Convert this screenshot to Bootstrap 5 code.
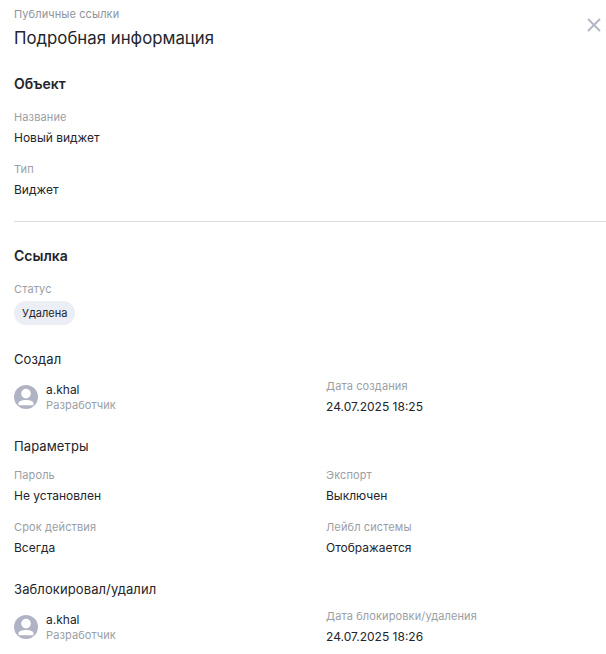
<!DOCTYPE html>
<html lang="ru">
<head>
  <meta charset="UTF-8">
  <meta name="viewport" content="width=device-width, initial-scale=1.0">
  <title>Подробная информация</title>
  <link href="https://cdn.jsdelivr.net/npm/bootstrap@5.3.3/dist/css/bootstrap.min.css" rel="stylesheet">
  <script src="https://cdn.jsdelivr.net/npm/bootstrap@5.3.3/dist/js/bootstrap.bundle.min.js"></script>
  <style>
    body { font-family: Inter, "Noto Sans", sans-serif; color: #23252b; background: #fff; overflow: hidden; }
    .panel-wrap { position: relative; padding: 6px 0 0 14px; height: 654px; overflow: hidden; }
    .crumb { font-size: 11px; line-height: 16px; color: #8f939c; letter-spacing: .1px; }
    .panel-title { font-size: 16.8px; font-weight: 400; line-height: 24px; margin: 4px 0 0; }
    .close-x { position: absolute; top: 18px; right: 5px; width: 14px; height: 14px; }
    .sect-title { font-size: 14px; font-weight: 600; line-height: 20px; margin: 0; }
    .sect-first { margin-top: 24px; }
    .sub-title { font-size: 13px; font-weight: 400; line-height: 18px; margin: 0; letter-spacing: .1px; }
    .sub-a { margin-top: 25px; }
    .sub-b { margin-top: 21px; }
    .sub-c { margin-top: 23px; }
    .lbl { font-size: 11px; line-height: 16px; color: #9a9ea6; letter-spacing: .12px; }
    .lbl-sect { margin-top: 15px; }
    .lbl-next { margin-top: 14px; }
    .val { font-size: 12px; line-height: 18px; margin-top: 4px; }
    .two-col { display: grid; grid-template-columns: 312px 1fr; }
    .two-user { margin-top: 10px; }
    .two-params { margin-top: 12px; }
    .two-next { margin-top: 14px; }
    .sep { height: 1px; background: #dcdde0; margin: 22px 0 24px; }
    .pill-status { display: inline-block; font-size: 11px; line-height: 24px; padding: 0 8px; border-radius: 12px; background: #ebeef5; margin-top: 4px; }
    .avatar-ico { width: 24px; height: 24px; flex: none; }
    .u-name { font-size: 12px; line-height: 16px; }
    .u-role { font-size: 11px; line-height: 14px; color: #9a9ea6; letter-spacing: .1px; }
  </style>
</head>
<body>
  <div class="panel-wrap">
    <div class="crumb">Публичные ссылки</div>
    <h1 class="panel-title">Подробная информация</h1>
    <svg class="close-x" viewBox="0 0 14 14" fill="none" stroke="#b3b7c6" stroke-width="2"><path d="M1 1l12 12M13 1L1 13"/></svg>

    <h2 class="sect-title sect-first">Объект</h2>
    <div class="lbl lbl-sect">Название</div>
    <div class="val">Новый виджет</div>
    <div class="lbl lbl-next">Тип</div>
    <div class="val">Виджет</div>

    <div class="sep"></div>

    <h2 class="sect-title">Ссылка</h2>
    <div class="lbl lbl-sect">Статус</div>
    <span class="pill-status">Удалена</span>

    <h3 class="sub-title sub-a">Создал</h3>
    <div class="two-col two-user">
      <div class="d-flex align-items-center gap-2">
        <svg class="avatar-ico" viewBox="0 0 24 24"><circle cx="12" cy="12" r="12" fill="#b0b3c4"/><circle cx="12" cy="8.600" r="4.800" fill="#fff"/><path d="M4.500 18.200c0-1.900 3.300-3.200 7.500-3.200s7.500 1.300 7.500 3.200v2.100h-15z" fill="#fff"/></svg>
        <div>
          <div class="u-name">a.khal</div>
          <div class="u-role">Разработчик</div>
        </div>
      </div>
      <div>
        <div class="lbl">Дата создания</div>
        <div class="val">24.07.2025 18:25</div>
      </div>
    </div>

    <h3 class="sub-title sub-b">Параметры</h3>
    <div class="two-col two-params">
      <div>
        <div class="lbl">Пароль</div>
        <div class="val">Не установлен</div>
      </div>
      <div>
        <div class="lbl">Экспорт</div>
        <div class="val">Выключен</div>
      </div>
    </div>
    <div class="two-col two-next">
      <div>
        <div class="lbl">Срок действия</div>
        <div class="val">Всегда</div>
      </div>
      <div>
        <div class="lbl">Лейбл системы</div>
        <div class="val">Отображается</div>
      </div>
    </div>

    <h3 class="sub-title sub-c">Заблокировал/удалил</h3>
    <div class="two-col two-user">
      <div class="d-flex align-items-center gap-2">
        <svg class="avatar-ico" viewBox="0 0 24 24"><circle cx="12" cy="12" r="12" fill="#b0b3c4"/><circle cx="12" cy="8.600" r="4.800" fill="#fff"/><path d="M4.500 18.200c0-1.900 3.300-3.200 7.500-3.200s7.500 1.300 7.500 3.200v2.100h-15z" fill="#fff"/></svg>
        <div>
          <div class="u-name">a.khal</div>
          <div class="u-role">Разработчик</div>
        </div>
      </div>
      <div>
        <div class="lbl">Дата блокировки/удаления</div>
        <div class="val">24.07.2025 18:26</div>
      </div>
    </div>
  </div>
</body>
</html>
